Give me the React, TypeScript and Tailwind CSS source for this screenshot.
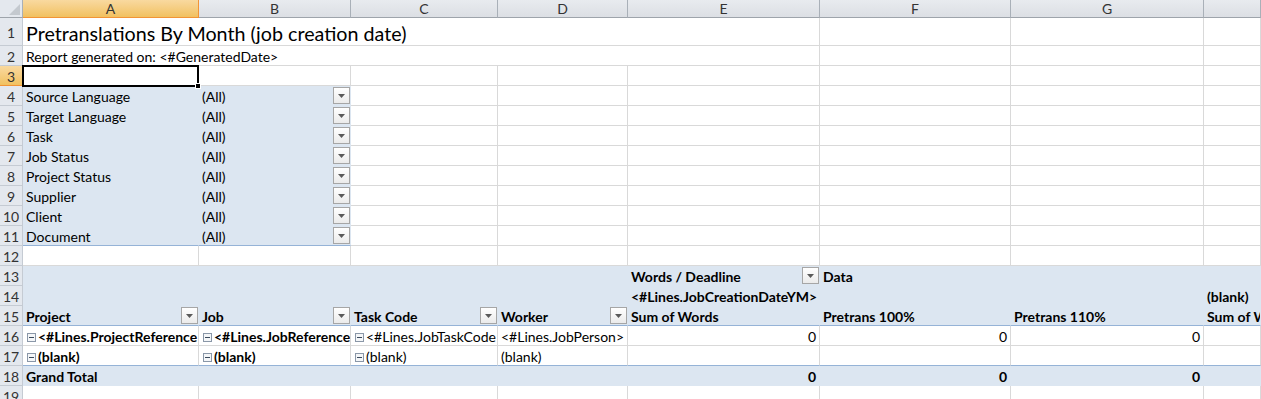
import React from "react";

const GRID = "grid grid-cols-[23px_176px_152px_147px_130px_192px_191px_193px_57px]";

const W = "bg-white border-r border-b border-[#d9d9d9]";
const BL = "bg-[#dce6f1] border-r border-b border-transparent";
const BLB = "bg-[#dce6f1] border-r border-transparent border-b border-b-[#95b3d7]";
const WB = "bg-white border-r border-[#d9d9d9] border-b border-b-[#95b3d7]";

function Cell({ children, c = "", right = false }: { children?: React.ReactNode; c?: string; right?: boolean }) {
  return (
    <div
      className={`relative flex items-end overflow-hidden whitespace-nowrap px-[3px] pb-0 leading-[16px] ${right ? "justify-end" : ""} ${c}`}
    >
      {children}
    </div>
  );
}

function Drop() {
  return (
    <div className="absolute right-0 top-[1px] flex h-[17px] w-[17px] items-center justify-center border border-[#a6a6a6] bg-linear-to-b from-white to-[#ebebeb]">
      <svg width="7" height="4" viewBox="0 0 7 4">
        <path d="M0 0H7L3.5 4Z" fill="#5a5a5a" />
      </svg>
    </div>
  );
}

function Minus() {
  return (
    <span className="mr-[2px] mb-[3px] inline-flex h-[9px] w-[9px] shrink-0 items-center justify-center border border-[#8a97a8] bg-[#f4f6f8]">
      <span className="h-[1px] w-[5px] bg-[#3a4a5c]" />
    </span>
  );
}

function RowHead({ n, sel = false, h = "h-[20px]" }: { n: number; sel?: boolean; h?: string }) {
  return (
    <div
      className={`${h} flex items-center justify-center border-r border-b pt-[2px] text-[14px] ${
        sel
          ? "bg-linear-to-b from-[#f9d99f] to-[#f1c15f] border-[#f29436] text-[#333]"
          : "bg-[#e4e8ee] border-[#c5cbd3] text-[#333]"
      }`}
    >
      {n}
    </div>
  );
}

function ColHead({ l, sel = false }: { l: string; sel?: boolean }) {
  return (
    <div
      className={`flex h-[18px] items-center justify-center border-r border-b text-[14px] ${
        sel
          ? "bg-linear-to-b from-[#f9d99f] to-[#f1c15f] border-r-[#f29436] border-b-[#f29436] text-[#333]"
          : "bg-linear-to-b from-[#e8ebef] to-[#dcdfe4] border-r-[#a9b0b8] border-b-[#9ea4ab] text-[#333]"
      }`}
    >
      {l}
    </div>
  );
}

const filters = [
  "Source Language",
  "Target Language",
  "Task",
  "Job Status",
  "Project Status",
  "Supplier",
  "Client",
  "Document",
];

export default function App() {
  return (
    <div
      className="relative h-[399px] w-[1261px] overflow-hidden bg-white text-[14px] text-black"
      style={{ fontFamily: "Lato, 'Liberation Sans', sans-serif" }}
    >
      <div className={GRID}>
        {/* column headers */}
        <div className="relative h-[18px] border-r border-b border-r-[#a9b0b8] border-b-[#9ea4ab] bg-[#e4e8ee]">
          <svg className="absolute right-[2px] bottom-[2px]" width="11" height="11" viewBox="0 0 11 11">
            <path d="M11 0V11H0Z" fill="#c4c9cf" />
          </svg>
        </div>
        <ColHead l="A" sel />
        <ColHead l="B" />
        <ColHead l="C" />
        <ColHead l="D" />
        <ColHead l="E" />
        <ColHead l="F" />
        <ColHead l="G" />
        <ColHead l="" />

        {/* row 1 */}
        <RowHead n={1} h="h-[28px]" />
        <Cell c={`${W} col-span-5 text-[19.7px] leading-[23px]`}>Pretranslations By Month (job creation date)</Cell>
        <Cell c={W} />
        <Cell c={W} />
        <Cell c={W} />

        {/* row 2 */}
        <RowHead n={2} />
        <Cell c={`${W} col-span-5`}>Report generated on: &lt;#GeneratedDate&gt;</Cell>
        <Cell c={W} />
        <Cell c={W} />
        <Cell c={W} />

        {/* row 3 */}
        <RowHead n={3} sel />
        {Array.from({ length: 8 }).map((_, i) => (
          <Cell key={i} c={W} />
        ))}

        {/* rows 4-11 filters */}
        {filters.map((f, i) => {
          const last = i === filters.length - 1;
          const blue = last ? BLB : BL;
          return (
            <React.Fragment key={f}>
              <RowHead n={4 + i} />
              <Cell c={blue}>{f}</Cell>
              <Cell c={blue}>
                (All)
                <Drop />
              </Cell>
              {Array.from({ length: 6 }).map((_, k) => (
                <Cell key={k} c={W} />
              ))}
            </React.Fragment>
          );
        })}

        {/* row 12 */}
        <RowHead n={12} />
        {Array.from({ length: 8 }).map((_, i) => (
          <Cell key={i} c={W} />
        ))}

        {/* row 13 */}
        <RowHead n={13} />
        <Cell c={BL} />
        <Cell c={BL} />
        <Cell c={BL} />
        <Cell c={BL} />
        <Cell c={`${BL} font-bold`}>
          Words / Deadline
          <Drop />
        </Cell>
        <Cell c={`${BL} font-bold`}>Data</Cell>
        <Cell c={BL} />
        <Cell c={BL} />

        {/* row 14 */}
        <RowHead n={14} />
        <Cell c={BL} />
        <Cell c={BL} />
        <Cell c={BL} />
        <Cell c={BL} />
        <Cell c={`${BL} font-bold`}>&lt;#Lines.JobCreationDateYM&gt;</Cell>
        <Cell c={BL} />
        <Cell c={BL} />
        <Cell c={`${BL} font-bold`}>(blank)</Cell>

        {/* row 15 */}
        <RowHead n={15} />
        <Cell c={`${BLB} font-bold`}>
          Project
          <Drop />
        </Cell>
        <Cell c={`${BLB} font-bold`}>
          Job
          <Drop />
        </Cell>
        <Cell c={`${BLB} font-bold`}>
          Task Code
          <Drop />
        </Cell>
        <Cell c={`${BLB} font-bold`}>
          Worker
          <Drop />
        </Cell>
        <Cell c={`${BLB} font-bold`}>Sum of Words</Cell>
        <Cell c={`${BLB} font-bold`}>Pretrans 100%</Cell>
        <Cell c={`${BLB} font-bold`}>Pretrans 110%</Cell>
        <Cell c={`${BLB} font-bold`}>Sum of Words</Cell>

        {/* row 16 */}
        <RowHead n={16} />
        <Cell c={`${W} font-bold pl-[4px]`}>
          <Minus />
          &lt;#Lines.ProjectReference&gt;
        </Cell>
        <Cell c={`${W} font-bold pl-[4px]`}>
          <Minus />
          &lt;#Lines.JobReference&gt;
        </Cell>
        <Cell c={`${W} pl-[4px]`}>
          <Minus />
          &lt;#Lines.JobTaskCode&gt;
        </Cell>
        <Cell c={W}>&lt;#Lines.JobPerson&gt;</Cell>
        <Cell c={W} right>
          0
        </Cell>
        <Cell c={W} right>
          0
        </Cell>
        <Cell c={W} right>
          0
        </Cell>
        <Cell c={W} />

        {/* row 17 */}
        <RowHead n={17} />
        <Cell c={`${WB} font-bold pl-[4px]`}>
          <Minus />
          (blank)
        </Cell>
        <Cell c={`${WB} font-bold pl-[4px]`}>
          <Minus />
          (blank)
        </Cell>
        <Cell c={`${WB} pl-[4px]`}>
          <Minus />
          (blank)
        </Cell>
        <Cell c={WB}>(blank)</Cell>
        <Cell c={WB} />
        <Cell c={WB} />
        <Cell c={WB} />
        <Cell c={WB} />

        {/* row 18 */}
        <RowHead n={18} />
        <Cell c={`${BL} font-bold`}>Grand Total</Cell>
        <Cell c={BL} />
        <Cell c={BL} />
        <Cell c={BL} />
        <Cell c={`${BL} font-bold`} right>
          0
        </Cell>
        <Cell c={`${BL} font-bold`} right>
          0
        </Cell>
        <Cell c={`${BL} font-bold`} right>
          0
        </Cell>
        <Cell c={BL} />

        {/* row 19 */}
        <RowHead n={19} />
        {Array.from({ length: 8 }).map((_, i) => (
          <Cell key={i} c={W} />
        ))}
      </div>

      {/* selection on A3 */}
      <div className="pointer-events-none absolute left-[22px] top-[65px] h-[22px] w-[177px] border-2 border-black" />
      <div className="pointer-events-none absolute left-[195px] top-[83px] h-[6px] w-[6px] border border-white bg-black" />
    </div>
  );
}
